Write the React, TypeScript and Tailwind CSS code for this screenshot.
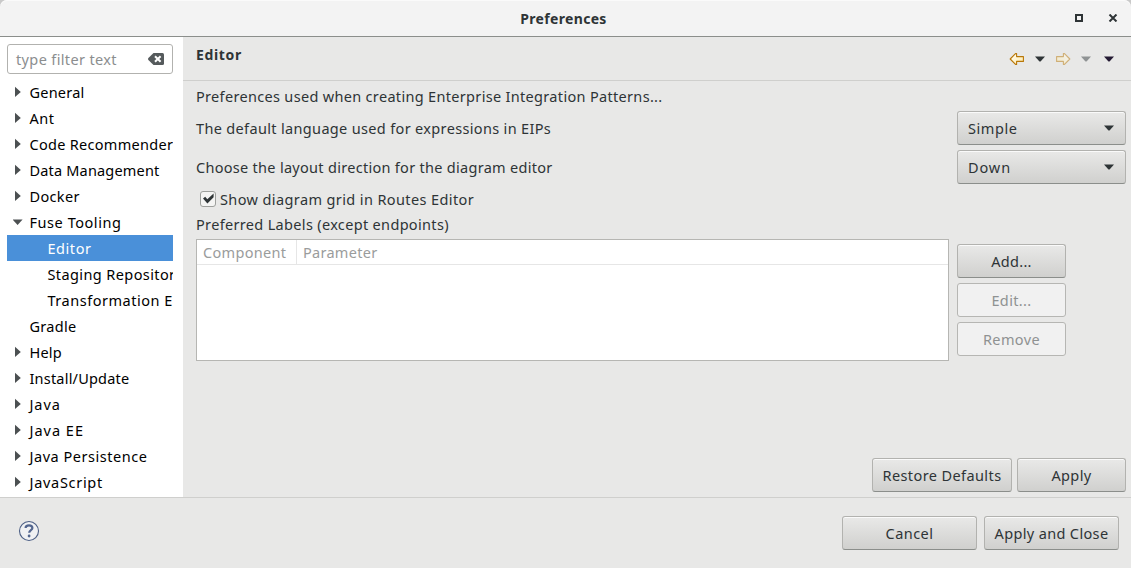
import React from "react";

type Item = { label: string; tracking: string; state?: "open" | "closed"; child?: boolean; selected?: boolean };

const items: Item[] = [
  { label: "General", tracking: "tracking-[0.22px]", state: "closed" },
  { label: "Ant", tracking: "tracking-[0.5px]", state: "closed" },
  { label: "Code Recommenders", tracking: "tracking-[0.29px]", state: "closed" },
  { label: "Data Management", tracking: "tracking-[0.18px]", state: "closed" },
  { label: "Docker", tracking: "tracking-[0.35px]", state: "closed" },
  { label: "Fuse Tooling", tracking: "tracking-[0.55px]", state: "open" },
  { label: "Editor", tracking: "tracking-[0.55px]", child: true, selected: true },
  { label: "Staging Repositories", tracking: "tracking-[0.4px]", child: true },
  { label: "Transformation Editor", tracking: "tracking-[0.52px]", child: true },
  { label: "Gradle", tracking: "tracking-[0.3px]" },
  { label: "Help", tracking: "tracking-[0.2px]", state: "closed" },
  { label: "Install/Update", tracking: "tracking-[0.2px]", state: "closed" },
  { label: "Java", tracking: "tracking-[0.9px]", state: "closed" },
  { label: "Java EE", tracking: "tracking-[1px]", state: "closed" },
  { label: "Java Persistence", tracking: "tracking-[0.53px]", state: "closed" },
  { label: "JavaScript", tracking: "tracking-[0.7px]", state: "closed" },
];

function Caret({ className = "text-[#2e3436]" }: { className?: string }) {
  return (
    <svg width="10" height="6" viewBox="0 0 10 6" className={`shrink-0 ${className}`}>
      <path d="M0 0.5h10L6 5q-1 1-2 0z" fill="currentColor" />
    </svg>
  );
}

function Arrow({ dim }: { dim?: boolean }) {
  return (
    <svg width="16" height="14" viewBox="0 0 16 14" className={`shrink-0 ${dim ? "-scale-x-100 opacity-50" : ""}`}>
      <defs>
        <linearGradient id={dim ? "fwd" : "back"} x1="0" y1="0" x2="1" y2="1">
          <stop offset="0" stopColor="#ffffff" />
          <stop offset="1" stopColor="#ffe9a0" />
        </linearGradient>
      </defs>
      <path
        d="M1.2 7L6.5 1.6H7.6V4.6H14.4V9.4H7.6V12.4H6.5Z"
        fill={dim ? "url(#fwd)" : "url(#back)"}
        stroke="#b87708"
        strokeWidth="1.1"
        strokeLinejoin="round"
      />
    </svg>
  );
}

function Button({ children, className = "", disabled }: { children: React.ReactNode; className?: string; disabled?: boolean }) {
  return (
    <button
      className={`flex h-[34px] shrink-0 items-center justify-center rounded-[3px] border whitespace-nowrap ${
        disabled
          ? "border-[#b6b6b3] bg-[#f1f1f1] text-[#8f9292]"
          : "border-[#b2b2af] border-b-[#8b8e8b] bg-linear-to-b from-[#e9e9e8] to-[#d0d0ce] text-[#2e3436] shadow-[inset_0_1px_#fafafa]"
      } ${className}`}
    >
      {children}
    </button>
  );
}

function Combo({ value, className }: { value: string; className: string }) {
  return (
    <Button className="w-[169px] justify-between! pr-[11px] pl-[10px]">
      <span className={className}>{value}</span>
      <Caret />
    </Button>
  );
}

export default function App() {
  return (
    <div className="flex h-[568px] w-[1131px] flex-col overflow-hidden bg-[#e8e8e7] font-['Noto_Sans','Open_Sans',sans-serif] text-[14.5px] leading-5 text-[#2e3436]">
      <div className="h-[37px] shrink-0 bg-[#c9c9c9]">
        <header className="grid h-[37px] grid-cols-[1fr_auto_1fr] items-center rounded-t-[7px] border-b border-[#8b8e8b] bg-[#f3f3f3] shadow-[inset_0_1px_#fafafa]">
          <span />
          <h1 className="pr-[4px] pt-px text-[14px] font-bold tracking-[0.33px]">Preferences</h1>
          <div className="flex items-center justify-end gap-[25px] pr-[13px]">
            <svg width="8" height="8" viewBox="0 0 8 8"><path d="M1 1h6v6H1z" fill="none" stroke="#2e3436" strokeWidth="2" /></svg>
            <svg width="10" height="8" viewBox="0 0 10 8"><path d="M1.5 0.5l7 7M8.5 0.5l-7 7" stroke="#2e3436" strokeWidth="2" /></svg>
          </div>
        </header>
      </div>

      <div className="flex h-[460px] shrink-0">
        <aside className="w-[183px] shrink-0 overflow-hidden bg-white pt-[7px] pl-[7px]">
          <div className="flex h-[30px] w-[166px] items-center justify-between rounded-[3px] border border-[#b2b2af] pr-[8px] pl-[8px] text-[#8b8e8f]">
            <span className="tracking-[0.36px]">type filter text</span>
            <svg width="16" height="12" viewBox="0 0 16 12" className="shrink-0">
              <path d="M5.5 0H14.5Q16 0 16 1.5V10.5Q16 12 14.5 12H5.5L0.4 7Q-.3 6 .4 5z" fill="#555a5c" />
              <path d="M7 3.2l5.6 5.6M12.6 3.2L7 8.8" stroke="#fff" strokeWidth="2" />
            </svg>
          </div>
          <ul className="w-[166px] pt-[5px] text-black">
            {items.map((it) => (
              <li
                key={it.label}
                className={`flex h-[26px] items-center overflow-hidden whitespace-nowrap ${it.selected ? "bg-[#4a90d9] text-white" : ""} ${it.child ? "pl-[40.5px]" : "pl-[6px]"}`}
              >
                {!it.child && (
                  <span className="flex w-[16.5px] shrink-0">
                    {it.state === "closed" && (
                      <svg width="8" height="12" viewBox="0 0 8 12" className="ml-0.5"><path d="M0 0.8L5.8 5.9L0 11z" fill="#4c5052" /></svg>
                    )}
                    {it.state === "open" && (
                      <svg width="11" height="7" viewBox="0 0 11 7"><path d="M-0.4 0.6H9.6L4.6 6z" fill="#4c5052" /></svg>
                    )}
                  </span>
                )}
                <span className={it.tracking}>{it.label}</span>
              </li>
            ))}
          </ul>
        </aside>

        <main className="flex min-w-0 flex-1 flex-col">
          <div className="flex h-[44px] shrink-0 items-center justify-between border-b border-[#cfcfcd] pr-[17px] pl-[13px]">
            <h2 className="-mt-[7px] text-[14px] font-bold tracking-[0.65px]">Editor</h2>
            <div className="flex items-center">
              <Arrow />
              <Caret className="ml-[10px] text-[#2e3436]" />
              <span className="ml-[10px] flex"><Arrow dim /></span>
              <Caret className="ml-[10px] text-[#8f9394]" />
              <Caret className="ml-[13px] text-[#241a33]" />
            </div>
          </div>

          <div className="flex flex-1 flex-col pr-[5px] pb-[5px] pl-[13px]">
            <p className="mt-[5px] h-5 tracking-[0.32px]">Preferences used when creating Enterprise Integration Patterns...</p>
            <div className="mt-[5px] flex h-[34px] items-center justify-between">
              <span className="tracking-[0.34px]">The default language used for expressions in EIPs</span>
              <Combo value="Simple" className="tracking-[0.55px]" />
            </div>
            <div className="mt-[5px] flex h-[34px] items-center justify-between">
              <span className="tracking-[0.29px]">Choose the layout direction for the diagram editor</span>
              <Combo value="Down" className="tracking-[0.9px]" />
            </div>
            <div className="mt-[5px] flex h-5 items-center pl-[4px]">
              <svg width="17" height="17" viewBox="0 0 17 17" className="mr-[3px] shrink-0">
                <rect x="0.5" y="0.5" width="15" height="15" rx="2.5" fill="#f4f4f3" stroke="#9d9f9c" />
                <path d="M3 7.6L5.2 5.8L7.3 8.2L13.6 2.6V6.2L7.4 12.4Z" fill="#2e3436" />
              </svg>
              <span className="tracking-[0.39px]">Show diagram grid in Routes Editor</span>
            </div>
            <div className="mt-[5px] h-5 tracking-[0.33px]">Preferred Labels (except endpoints)</div>
            <div className="mt-[5px] flex h-[122px] justify-between">
              <div className="w-[753px] border border-[#b6b6b3] bg-white text-[#9a9c9c]">
                <div className="flex h-[25px] items-center border-b border-[#e6e6e6]">
                  <span className="flex h-full w-[100px] items-center border-r border-[#e6e6e6] pl-[6px] tracking-[0.32px]">Component</span>
                  <span className="pl-[6px] tracking-[0.28px]">Parameter</span>
                </div>
              </div>
              <div className="flex w-[169px] flex-col gap-[5px] pt-[5px]">
                <Button className="w-[109px] tracking-[0.3px]">Add...</Button>
                <Button disabled className="w-[109px] tracking-[0.35px]">Edit...</Button>
                <Button disabled className="w-[109px] tracking-[0.37px]">Remove</Button>
              </div>
            </div>
            <div className="mt-auto flex justify-end gap-[5px]">
              <Button className="w-[140px] tracking-[0.4px]">Restore Defaults</Button>
              <Button className="w-[109px] tracking-[0.36px]">Apply</Button>
            </div>
          </div>
        </main>
      </div>

      <footer className="flex flex-1 items-center justify-between border-t border-[#cfcfcd] pr-[12px] pl-[18px]">
        <svg width="22" height="22" viewBox="0 0 22 22" className="-mt-[5px]">
          <circle cx="11" cy="11" r="9.5" fill="#f0f1f3" stroke="#4c5f85" strokeWidth="1.1" />
          <path d="M7.6 8Q7.6 5.4 11 5.4T14.4 8.1C14.4 10 11.2 10.3 11.2 12.7" fill="none" stroke="#53668f" strokeWidth="2.2" />
          <circle cx="11.1" cy="16" r="1.4" fill="#53668f" />
        </svg>
        <div className="flex gap-[7px]">
          <Button className="w-[135px] tracking-[0.47px]">Cancel</Button>
          <Button className="w-[135px] tracking-[0.35px]">Apply and Close</Button>
        </div>
      </footer>
    </div>
  );
}
